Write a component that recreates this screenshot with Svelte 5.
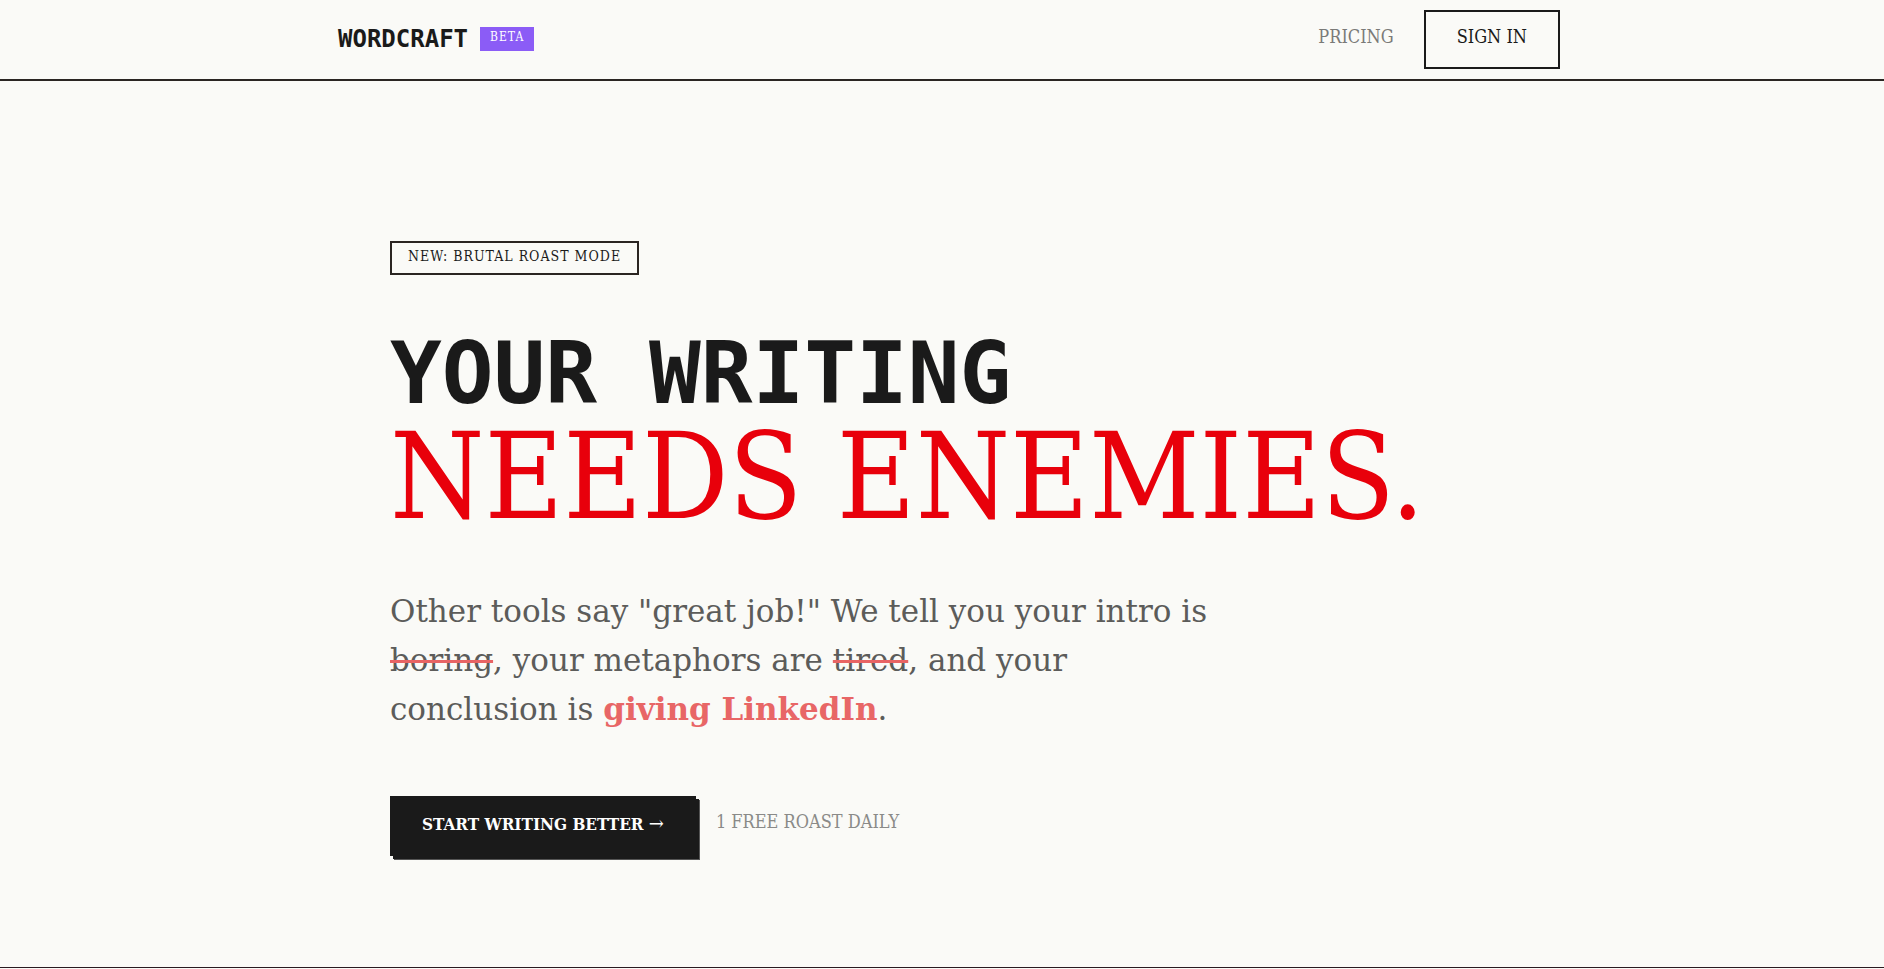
<script lang="ts">
	const brand = 'WORDCRAFT';
	const title = ['YOUR WRITING', 'NEEDS ENEMIES.'];
</script>

<header>
	<div class="bar">
		<a class="logo" href="/">
			<span class="name">{brand}</span>
			<span class="beta">BETA</span>
		</a>
		<nav>
			<a class="link" href="/pricing">PRICING</a>
			<button class="outline">SIGN IN</button>
		</nav>
	</div>
</header>

<main>
	<section class="hero">
		<div class="tag">NEW: BRUTAL ROAST MODE</div>
		<h1>
			<span class="pixel">{title[0]}</span>
			<span class="angry">{title[1]}</span>
		</h1>
		<p class="intro">
			Other tools say "great job!" We tell you your intro is <s>boring</s>, your metaphors are
			<s>tired</s>, and your conclusion is <strong>giving LinkedIn</strong>.
		</p>
		<div class="actions">
			<button class="primary">START WRITING BETTER <span class="arrow">→</span></button>
			<span class="note">1 FREE ROAST DAILY</span>
		</div>
	</section>
</main>

<style>
	:global(body) {
		margin: 0;
		background: #fafaf7;
		color: #1a1a1a;
		font-family: 'DejaVu Serif Condensed', 'DejaVu Serif', serif;
	}
	header {
		border-bottom: 2px solid #2a2522;
	}
	.bar {
		display: flex;
		align-items: center;
		justify-content: space-between;
		max-width: 1236px;
		margin: 0 auto;
		padding: 10px 22px;
	}
	a {
		color: inherit;
		text-decoration: none;
	}
	button {
		font-family: inherit;
		font-size: 18px;
		line-height: 24px;
		border-radius: 0;
		cursor: pointer;
	}
	.logo {
		display: flex;
		align-items: center;
		gap: 12px;
		padding: 0 0 2px 14px;
	}
	.name {
		font-family: 'DejaVu Sans Mono', monospace;
		font-size: 24px;
		line-height: 28px;
		font-weight: 700;
	}
	.beta {
		padding: 1px 10px 5px;
		background: #8b5cf6;
		color: #fff;
		font-size: 12px;
		line-height: 18px;
		letter-spacing: 1px;
	}
	nav {
		display: flex;
		align-items: center;
		gap: 30px;
	}
	.link {
		padding-bottom: 6px;
		color: #7a7a78;
		font-size: 18px;
		line-height: 24px;
	}
	.outline {
		padding: 13px 31px 18px;
		border: 2px solid #1a1a1a;
		background: transparent;
		color: #1a1a1a;
	}
	.hero {
		max-width: 1104px;
		margin: 0 auto;
		padding: 160px 24px 111px;
	}
	.tag {
		width: fit-content;
		padding: 4px 16px 8px;
		border: 2px solid #2a2522;
		font-size: 14px;
		line-height: 18px;
		letter-spacing: 1px;
	}
	h1 {
		margin: 50px 0 54px;
		font-weight: 400;
	}
	h1 span {
		display: block;
		white-space: nowrap;
	}
	.pixel {
		font-family: 'DejaVu Sans Mono', monospace;
		font-size: 86px;
		line-height: 96px;
		font-weight: 700;
	}
	.angry {
		color: #e8000b;
		font-size: 120px;
		line-height: 112px;
	}
	.intro {
		max-width: 832px;
		margin: 0 0 62px;
		color: #5c5c5a;
		font-family: 'DejaVu Serif', serif;
		font-size: 31px;
		line-height: 49px;
	}
	s {
		text-decoration: line-through 3px #e86464;
	}
	strong {
		color: #e86666;
	}
	.actions {
		display: flex;
		align-items: center;
		gap: 20px;
	}
	.primary {
		padding: 15px 32px 20px;
		border: 0;
		background: #1a1a1a;
		color: #fff;
		font-size: 17px;
		font-weight: 700;
		box-shadow:
			3px 3px 0 #1a1a1a,
			4px 4px 0 #555;
	}
	.arrow {
		font-size: 20px;
		font-weight: 400;
	}
	.note {
		padding-bottom: 8px;
		color: #8a8a88;
		font-size: 18px;
		line-height: 24px;
	}
	main {
		border-bottom: 1px solid #2a1a20;
	}
</style>
